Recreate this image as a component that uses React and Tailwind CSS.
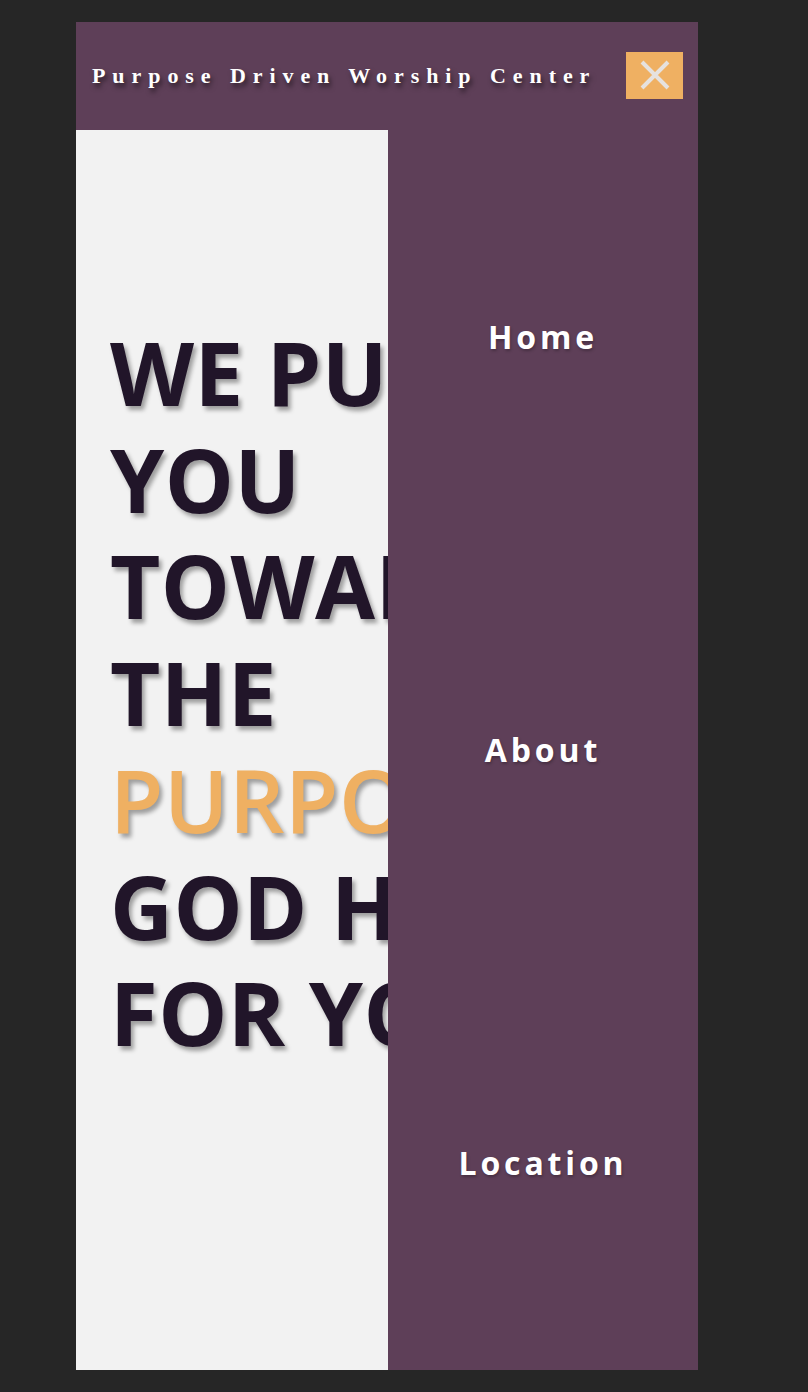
import React from "react";

const navLinks = ["Home", "About", "Location"];

const heroLines = [
  { text: "WE PUSH", accent: false },
  { text: "YOU", accent: false },
  { text: "TOWARDS", accent: false },
  { text: "THE", accent: false },
  { text: "PURPOSE", accent: true },
  { text: "GOD HAS", accent: false },
  { text: "FOR YOU", accent: false },
];

const CloseIcon = () => (
  <svg width="34" height="34" viewBox="0 0 34 34" fill="none">
    <path d="M4 4L30 30M30 4L4 30" stroke="#e6e2df" strokeWidth="4" />
  </svg>
);

const App = () => {
  return (
    <div className="min-h-[1392px] bg-[#262626] pt-[22px] pl-[76px]">
      <div className="w-[622px] h-[1348px] flex flex-col">
        {/* header */}
        <header className="h-[108px] bg-[#5e3f58] flex items-center justify-between pl-[16px] pr-[15px] pb-[2px]">
          <h1
            className="text-white font-bold text-[22px] tracking-[0.315em] [text-shadow:2px_4px_5px_rgba(0,0,0,0.55)]"
            style={{ fontFamily: '"Liberation Serif", serif' }}
          >
            Purpose Driven Worship Center
          </h1>
          <button className="w-[57px] h-[47px] bg-[#efb062] flex items-center justify-center">
            <CloseIcon />
          </button>
        </header>

        <div className="relative flex-1 flex">
          {/* hero */}
          <div className="w-[312px] bg-[#f2f2f2] overflow-hidden pt-[189px] pl-[34px]">
            <h2
              className="font-bold text-[87px] leading-[106.7px] tracking-[0.005em] whitespace-nowrap text-[#211529] [text-shadow:3px_4px_4px_rgba(0,0,0,0.35)]"
              style={{ fontFamily: '"Open Sans", sans-serif' }}
            >
              {heroLines.map((line) => (
                <span
                  key={line.text}
                  className={line.accent ? "block font-semibold text-[#efb062]" : "block"}
                >
                  {line.text}
                </span>
              ))}
            </h2>
          </div>

          {/* side nav */}
          <nav className="w-[310px] bg-[#5e3f58] flex flex-col">
            {navLinks.map((link) => (
              <a
                key={link}
                href="#"
                className="flex-1 flex items-center justify-center text-white font-bold text-[32px] tracking-[0.12em] [text-shadow:1px_2px_3px_rgba(0,0,0,0.25)]"
                style={{ fontFamily: '"Open Sans", sans-serif' }}
              >
                {link}
              </a>
            ))}
          </nav>
        </div>
      </div>
    </div>
  );
};

export default App;
